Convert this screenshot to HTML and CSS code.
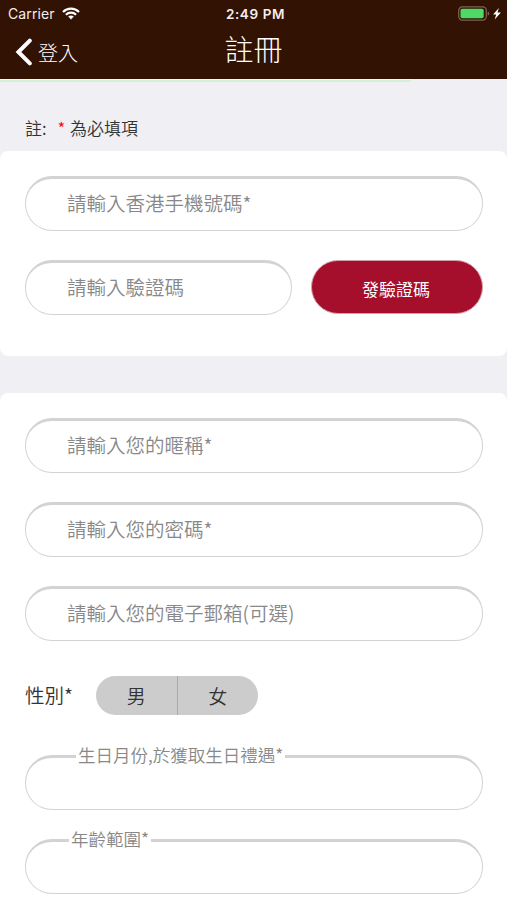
FILE: index.html
```html
<!DOCTYPE html>
<html lang="zh-HK">
<head>
    <meta charset="utf-8">
    <title>註冊</title>
    <meta name="viewport" content="width=device-width, initial-scale=1">
    <link rel="stylesheet" href="styles.css">
</head>
<body>
    <header class="header">
        <div class="status">
            <div class="carrier">
                <span>Carrier</span>
                <svg class="wifi" width="18" height="13" viewBox="0 0 18 13">
                    <path d="M1 4.9 C5.4 0.4 12.6 0.4 17 4.9" fill="none" stroke="#fff" stroke-width="2.2"/>
                    <path d="M3.9 7.7 C6.8 4.9 11.2 4.9 14.1 7.7" fill="none" stroke="#fff" stroke-width="2.1"/>
                    <path d="M6.2 9.6 C7.8 8.1 10.2 8.1 11.8 9.6 L9 12.5 Z" fill="#fff"/>
                </svg>
            </div>
            <div class="time">2:49 PM</div>
            <div class="battery">
                <svg width="44" height="16" viewBox="0 0 44 16">
                    <rect x="0.7" y="0.9" width="27.6" height="13.2" rx="3.6" fill="none" stroke="#806257" stroke-width="1.2"/>
                    <rect x="2.5" y="2.7" width="23.2" height="9.6" rx="1.8" fill="#4cd964"/>
                    <path d="M29.7 5.4 C31.8 6 31.8 9 29.7 9.6 Z" fill="#806257"/>
                    <path d="M40.8 1.9 L35.1 8.6 L38.2 8.6 L36.7 13.6 L42.9 6.5 L39.5 6.5 Z" fill="#fff"/>
                </svg>
            </div>
        </div>
        <div class="nav">
            <a class="back" href="#">
                <svg width="17" height="28" viewBox="0 0 17 28">
                    <path d="M14.8 2.6 L3.4 14 L14.8 25.4" fill="none" stroke="#fff" stroke-width="4" stroke-linecap="round"/>
                </svg>
                <span>登入</span>
            </a>
            <h1>註冊</h1>
        </div>
    </header>
    <div class="progress"></div>
    <p class="note">註: <span class="star">*</span> 為必填項</p>
    <form action="">
        <div class="card phone">
            <input class="field" type="text" placeholder="請輸入香港手機號碼*">
            <div class="row">
                <input class="field" type="text" placeholder="請輸入驗證碼">
                <button class="send" type="button">發驗證碼</button>
            </div>
        </div>
        <div class="card info">
            <input class="field" type="text" placeholder="請輸入您的暱稱*">
            <input class="field" type="password" placeholder="請輸入您的密碼*">
            <input class="field" type="text" placeholder="請輸入您的電子郵箱(可選)">
            <div class="gender">
                <span class="gender-label">性別*</span>
                <div class="toggle">
                    <button type="button">男</button>
                    <button type="button">女</button>
                </div>
            </div>
            <div class="select">
                <label class="birth" for="birth">生日月份,於獲取生日禮遇*</label>
                <input class="field" id="birth" type="text">
            </div>
            <div class="select">
                <label class="age" for="age">年齡範圍*</label>
                <input class="field" id="age" type="text">
            </div>
        </div>
    </form>
</body>
</html>
```

FILE: styles.css
```css
* {
    box-sizing: border-box;
}
body {
    margin: 0;
    height: 900px;
    overflow: hidden;
    background: #efeff4;
    color: #333;
    font-family: "Noto Sans CJK TC", sans-serif;
    font-weight: 350;
}
.header {
    height: 79px;
    background: #311203;
    color: #fff;
}
.status {
    display: grid;
    grid-template-columns: 1fr auto 1fr;
    align-items: center;
    height: 27px;
    padding: 0 5px 0 8px;
    font-family: Inter, sans-serif;
    font-size: 14px;
    font-weight: 400;
    color: #f3eeec;
}
.carrier {
    display: flex;
    align-items: center;
    gap: 7px;
    letter-spacing: 0.1px;
}
.time {
    padding-left: 1px;
    font-weight: 600;
    font-size: 13.5px;
    letter-spacing: 0.6px;
}
.battery {
    justify-self: end;
    height: 16px;
}
.battery svg,
.back svg {
    display: block;
}
.nav {
    display: grid;
    grid-template-columns: 1fr auto 1fr;
    height: 52px;
}
.back {
    display: flex;
    align-items: center;
    gap: 6px;
    height: 50px;
    padding-left: 15px;
    color: #fff;
    font-size: 20px;
    font-weight: 300;
    text-decoration: none;
}
.nav h1 {
    margin: 0;
    font-size: 29px;
    line-height: 43px;
    font-weight: 300;
}
.progress {
    width: 411px;
    height: 3px;
    border-top: 1px solid #f7f7f7;
    background: #d5f0d8;
}
.note {
    margin: 0;
    height: 69px;
    padding: 34px 0 0 25px;
    font-size: 17px;
    line-height: 24px;
}
.star {
    margin: 0 1px 0 7px;
    color: #f00;
}
.card {
    display: flex;
    flex-direction: column;
    background: #fff;
    border-radius: 8px;
    padding: 25px 24px 0 25px;
}
.phone {
    height: 205px;
    gap: 29px;
    margin-bottom: 37px;
}
.info {
    height: 507px;
    gap: 29.3px;
    padding-top: 24.5px;
    border-radius: 8px 8px 0 0;
}
.field {
    display: block;
    width: 100%;
    height: 55px;
    flex-shrink: 0;
    padding: 0 41px 4px;
    border: 1px solid #d3d3d3;
    border-top: 3px solid #d3d3d3;
    border-radius: 27px;
    background: #fff;
    font-family: inherit;
    font-size: 19.5px;
    font-weight: 350;
    outline: 0;
}
.field::placeholder {
    color: #888;
    opacity: 1;
}
.row {
    display: grid;
    grid-template-columns: 267px 172px;
    justify-content: space-between;
}
.send {
    height: 54px;
    padding: 3px 2px 0 0;
    border: 1px solid #d0a0aa;
    border-radius: 27px;
    background: #a50f2b;
    color: #fff;
    font-family: inherit;
    font-size: 17px;
    font-weight: 400;
}
.gender {
    display: flex;
    align-items: center;
    height: 39px;
    margin: 6px 0 10px;
}
.gender-label {
    width: 71px;
    padding-bottom: 2px;
    font-size: 19.5px;
}
.toggle {
    display: flex;
    width: 162px;
    height: 39px;
    border-radius: 20px;
    overflow: hidden;
    background: #ccc;
}
.toggle button {
    flex: 1;
    padding: 0;
    border: 0;
    background: none;
    color: #333;
    font-family: inherit;
    font-size: 19px;
    font-weight: 350;
}
.toggle button + button {
    border-left: 1px solid #aaa;
}
.select {
    position: relative;
}
.select label {
    position: absolute;
    top: -12px;
    padding: 0 2px;
    background: #fff;
    color: #888;
    font-size: 17.5px;
    line-height: 24px;
    white-space: nowrap;
}
.birth {
    left: 51px;
}
.age {
    left: 44px;
}
```
